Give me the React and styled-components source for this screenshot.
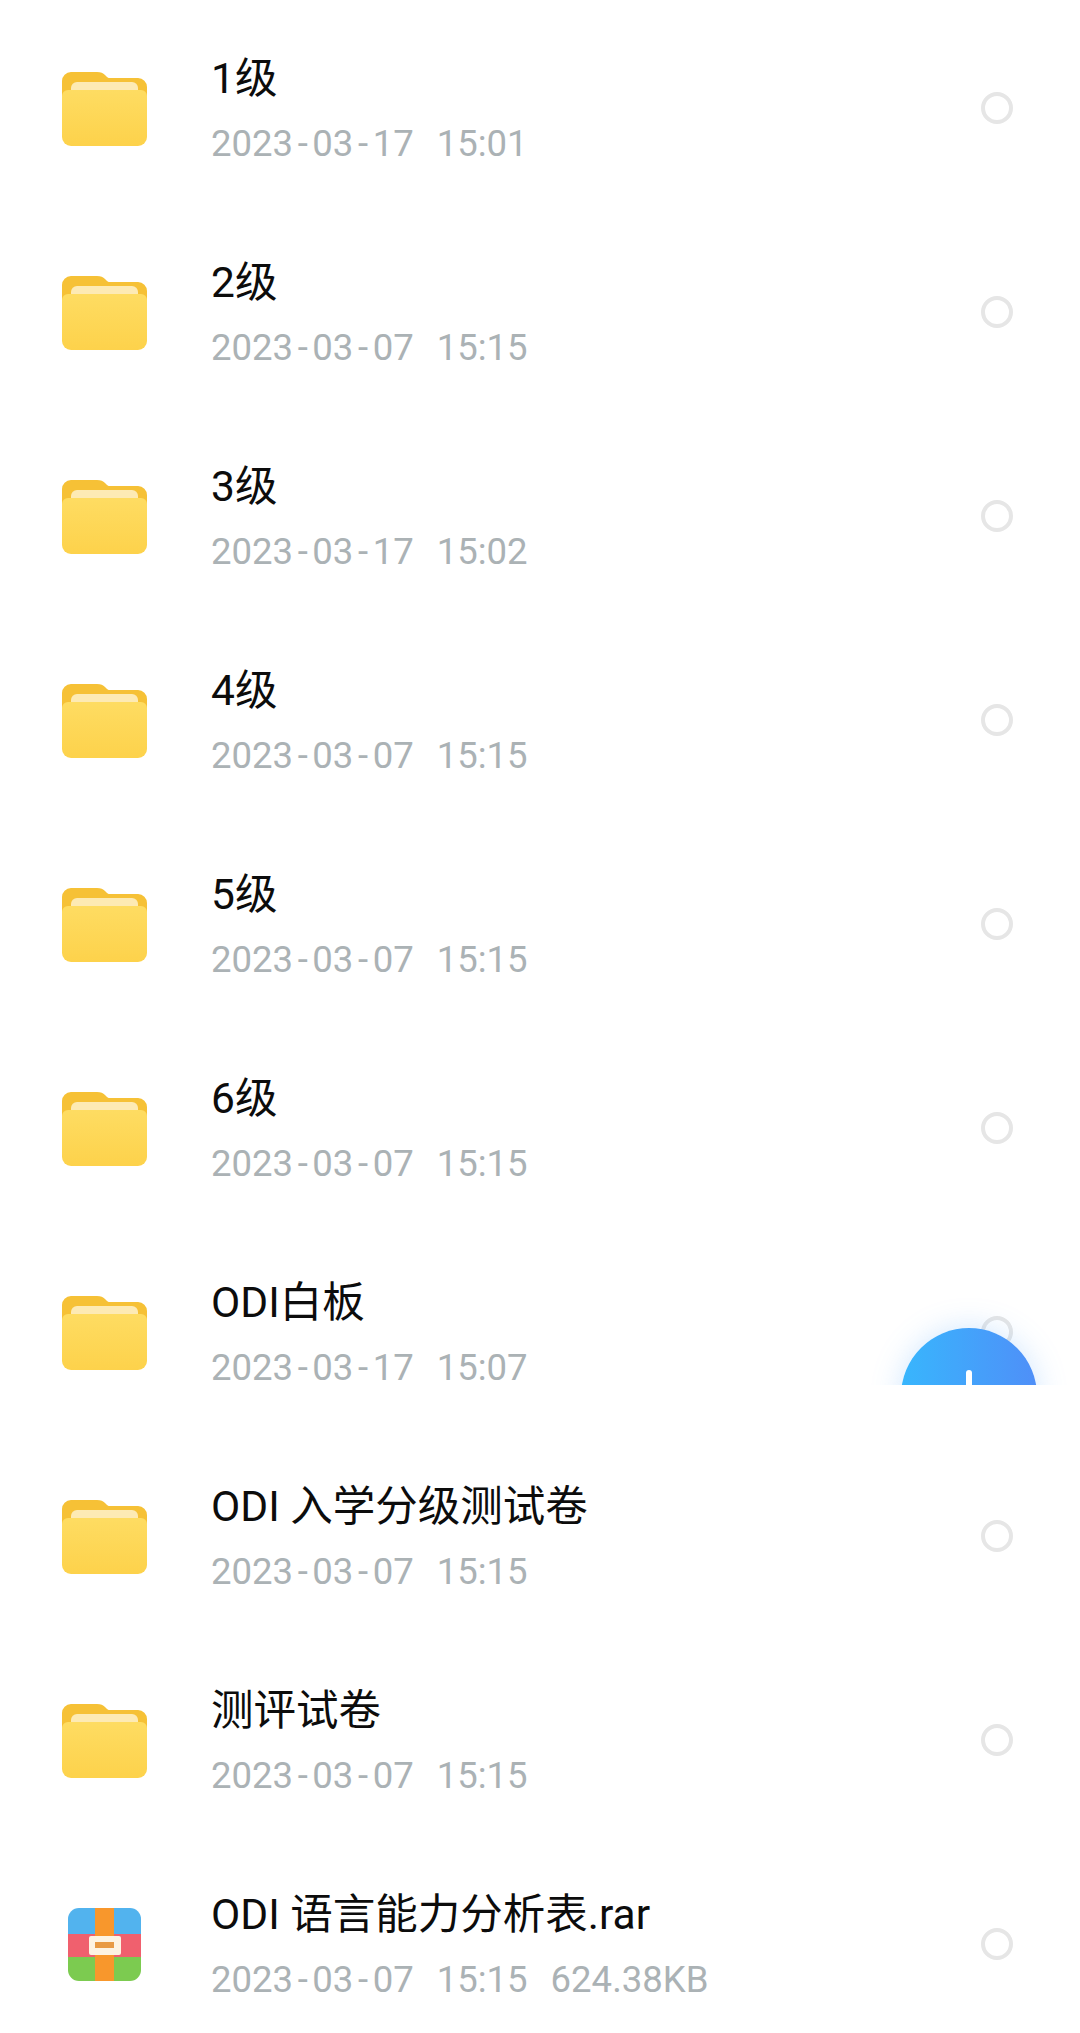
import React from 'react'
import styled, { createGlobalStyle } from 'styled-components'

const GlobalStyle = createGlobalStyle`
  html, body {
    margin: 0;
    padding: 0;
    background: #fff;
  }
`

const Page = styled.div`
  position: relative;
  width: 1080px;
  height: 2033px;
  overflow: hidden;
  padding-top: 6px;
  box-sizing: border-box;
  background: #fff;
  font-family: Roboto, "Noto Sans CJK SC", sans-serif;
`

const Row = styled.div`
  display: flex;
  align-items: center;
  height: 204px;
  padding: 0 67px 0 62px;
  box-sizing: border-box;
`

const IconSlot = styled.div`
  display: flex;
  justify-content: center;
  width: 85px;
  flex: none;

  svg {
    filter: blur(0.6px);
  }
`

const Info = styled.div`
  flex: 1;
  margin-left: 64px;
  display: flex;
  flex-direction: column;
  gap: 19px;
  margin-top: 3px;
`

const Name = styled.div`
  font-size: 42.5px;
  line-height: 50px;
  color: #0c0c0c;
`

const Meta = styled.div`
  display: flex;
  gap: 23px;
  font-size: 36.5px;
  line-height: 42px;
  color: #abb2b5;
`

const Dash = styled.span`
  margin: 0 4.6px;
`

const Radio = styled.div`
  width: 32px;
  height: 32px;
  box-sizing: border-box;
  border: 4px solid #e6e6e6;
  border-radius: 50%;
  flex: none;
`

const FabClip = styled.div`
  position: absolute;
  left: 860px;
  top: 1280px;
  width: 220px;
  height: 105px;
  overflow: hidden;
`

const Fab = styled.div`
  position: absolute;
  left: 41px;
  top: 48px;
  width: 136px;
  height: 136px;
  border-radius: 50%;
  background: linear-gradient(90deg, #38b6fd 0%, #4f8ff8 100%);
  box-shadow: 0 0 30px rgba(90, 170, 250, 0.28);

  &::before {
    content: '';
    position: absolute;
    left: 65px;
    top: 42px;
    width: 6px;
    height: 40px;
    border-radius: 3px;
    background: #fff;
  }
`

const FolderIcon = () => (
  <svg width="85" height="75" viewBox="0 0 85 75">
    <defs>
      <linearGradient id="folderFront" x1="0" y1="0" x2="0" y2="1">
        <stop offset="0" stopColor="#fedc62" />
        <stop offset="1" stopColor="#fdd24b" />
      </linearGradient>
    </defs>
    <path
      d="M0 10a9 9 0 0 1 9-9h26c4 0 6 1 8 3l2 2c1 1 2 1 4 1h27a9 9 0 0 1 9 9v30H0z"
      fill="#f6c136"
    />
    <path d="M9 17a6 6 0 0 1 6-6h55a6 6 0 0 1 6 6v6H9z" fill="#fdeab4" />
    <path
      d="M0 25a6 6 0 0 1 6-6h73a6 6 0 0 1 6 6v41a9 9 0 0 1-9 9H9a9 9 0 0 1-9-9z"
      fill="url(#folderFront)"
    />
  </svg>
)

const RarIcon = () => (
  <svg width="73" height="73" viewBox="0 0 73 73">
    <defs>
      <clipPath id="rarClip">
        <rect width="73" height="73" rx="11" />
      </clipPath>
    </defs>
    <g clipPath="url(#rarClip)">
      <rect width="73" height="26" fill="#52b3ee" />
      <rect y="26" width="73" height="23" fill="#f0606e" />
      <rect y="49" width="73" height="24" fill="#7ccb50" />
      <rect x="27" width="19" height="73" fill="#f8972c" />
    </g>
    <rect x="21" y="28" width="32" height="19" rx="2" fill="#fdf3e2" />
    <rect x="27" y="34" width="19" height="6" fill="#e89a44" />
  </svg>
)

const rows = [
  { name: '1级', date: '2023-03-17', time: '15:01' },
  { name: '2级', date: '2023-03-07', time: '15:15' },
  { name: '3级', date: '2023-03-17', time: '15:02' },
  { name: '4级', date: '2023-03-07', time: '15:15' },
  { name: '5级', date: '2023-03-07', time: '15:15' },
  { name: '6级', date: '2023-03-07', time: '15:15' },
  { name: 'ODI白板', date: '2023-03-17', time: '15:07' },
  { name: 'ODI 入学分级测试卷', date: '2023-03-07', time: '15:15' },
  { name: '测评试卷', date: '2023-03-07', time: '15:15' },
  { name: 'ODI 语言能力分析表.rar', date: '2023-03-07', time: '15:15', size: '624.38KB', rar: true },
]

const DateText = ({ value }) => {
  const [y, m, d] = value.split('-')
  return (
    <span>
      {y}<Dash>-</Dash>{m}<Dash>-</Dash>{d}
    </span>
  )
}

const App = () => (
  <Page>
    <GlobalStyle />
    {rows.map((row) => (
      <Row key={row.name}>
        <IconSlot>{row.rar ? <RarIcon /> : <FolderIcon />}</IconSlot>
        <Info>
          <Name>{row.name}</Name>
          <Meta>
            <DateText value={row.date} />
            <span>{row.time}</span>
            {row.size && <span>{row.size}</span>}
          </Meta>
        </Info>
        <Radio />
      </Row>
    ))}
    <FabClip>
      <Fab />
    </FabClip>
  </Page>
)

export default App
